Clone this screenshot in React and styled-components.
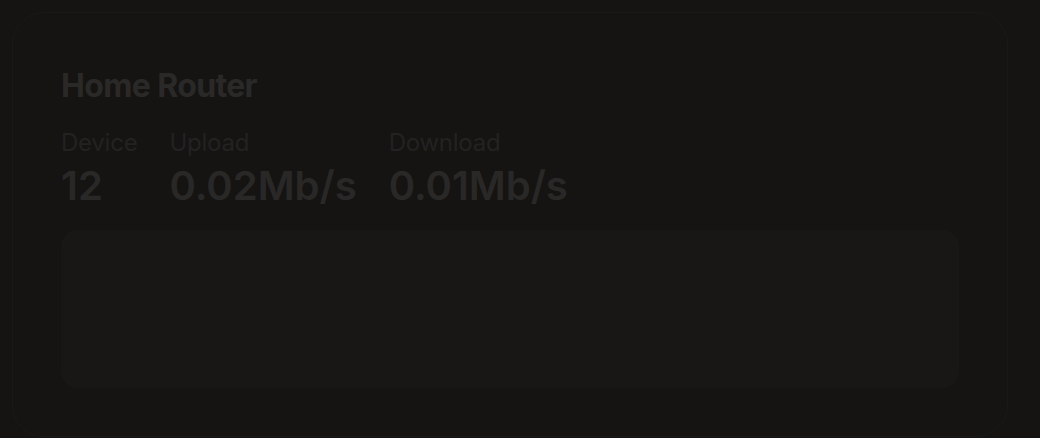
import styled, { createGlobalStyle } from 'styled-components'

const GlobalStyle = createGlobalStyle`
  html, body {
    margin: 0;
    padding: 0;
    background: #151413;
    font-family: Inter, "Noto Sans", sans-serif;
  }
`

const Page = styled.div`
  padding: 12px;
  height: 438px;
  box-sizing: border-box;
  overflow: hidden;
`

const Card = styled.section`
  width: 996px;
  box-sizing: border-box;
  padding: 54px 48px 48px;
  border: 1px solid #1a1918;
  border-radius: 32px;
  background: #151413;
`

const Title = styled.h1`
  margin: 0 0 24px;
  font-size: 32px;
  line-height: 1.2;
  font-weight: 700;
  letter-spacing: -0.02em;
  color: #2a2928;
`

const Stats = styled.div`
  display: flex;
  gap: 32px;
`

const Stat = styled.div`
  display: flex;
  flex-direction: column;
  gap: 4px;
`

const Label = styled.span`
  font-size: 24px;
  line-height: 1.2;
  font-weight: 400;
  letter-spacing: -0.01em;
  color: #232221;
`

const Value = styled.span`
  font-size: 40px;
  line-height: 1.2;
  font-weight: 600;
  color: #292827;
`

const Chart = styled.div`
  margin-top: 20px;
  height: 158px;
  border-radius: 16px;
  background: #181716;
`

const stats = [
  { label: 'Device', value: '12' },
  { label: 'Upload', value: '0.02Mb/s' },
  { label: 'Download', value: '0.01Mb/s' },
]

export default function App() {
  return (
    <>
      <GlobalStyle />
      <Page>
        <Card>
          <Title>Home Router</Title>
          <Stats>
            {stats.map(({ label, value }) => (
              <Stat key={label}>
                <Label>{label}</Label>
                <Value>{value}</Value>
              </Stat>
            ))}
          </Stats>
          <Chart />
        </Card>
      </Page>
    </>
  )
}
